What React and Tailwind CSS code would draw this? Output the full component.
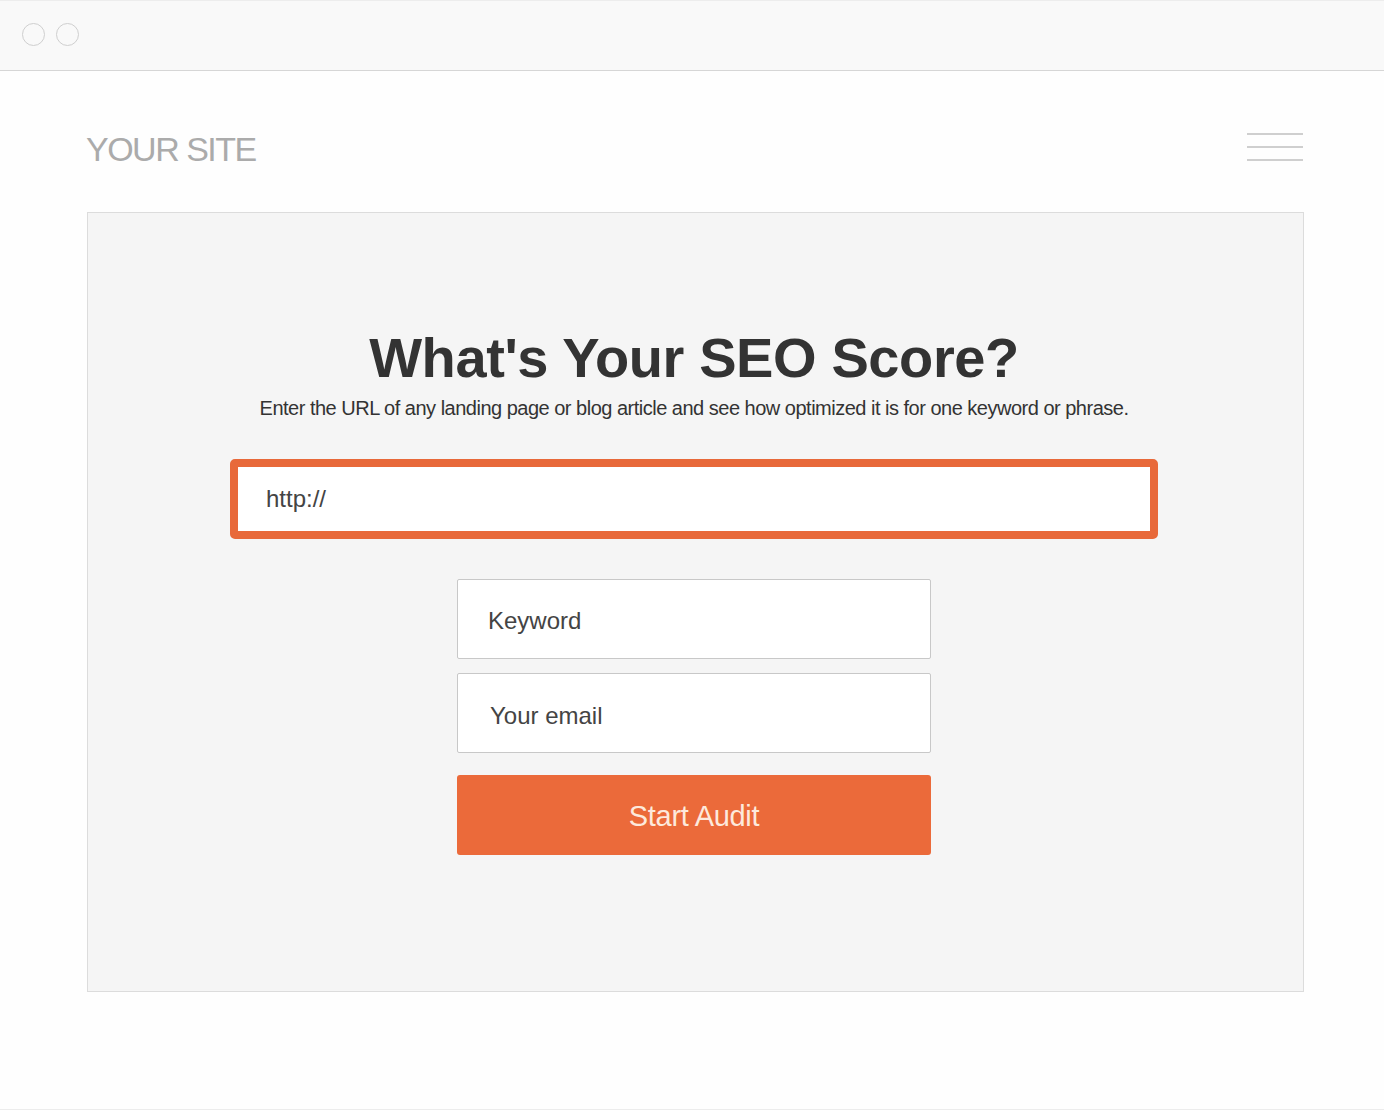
import React from 'react';

const App = () => {
  return (
    <div className="w-[1384px] h-[1110px] bg-[#fefefe] border-b border-[#ececec] overflow-hidden" style={{ fontFamily: '"Liberation Sans", Arial, sans-serif' }}>
      {/* Browser chrome */}
      <div className="h-[71px] bg-[#f9f9f9] border-b border-[#d6d6d6] border-t border-t-[#ededed] flex items-start pt-[22px] pl-[22px] gap-[11px]">
        <div className="w-[23px] h-[23px] rounded-full border-[1.5px] border-[#cfcfcf]" />
        <div className="w-[23px] h-[23px] rounded-full border-[1.5px] border-[#cfcfcf]" />
      </div>

      <div className="pl-[87px] pr-[80px]">
        {/* Site header */}
        <div className="flex justify-between items-start mt-[61px]">
          <span className="text-[34px] leading-none tracking-[-1.5px] text-[#ababab] -ml-[1px]">YOUR SITE</span>
          <div className="flex flex-col gap-[11px] pt-[1px] mr-[1px]">
            <div className="w-[56px] h-[2px] bg-[#cfcfcf]" />
            <div className="w-[56px] h-[2px] bg-[#cfcfcf]" />
            <div className="w-[56px] h-[2px] bg-[#cfcfcf]" />
          </div>
        </div>

        {/* Audit card */}
        <div className="mt-[46px] h-[780px] bg-[#f5f5f5] border border-[#dcdcdc] flex flex-col items-center pt-[117px] pr-[3px]">
          <h1 className="text-[56px] leading-none font-bold tracking-[-0.4px] text-[#333333]">What's Your SEO Score?</h1>
          <p className="mt-[10px] text-[20px] leading-[24px] tracking-[-0.5px] text-[#333333]">
            Enter the URL of any landing page or blog article and see how optimized it is for one keyword or phrase.
          </p>

          <div className="mt-[39px] w-[928px] h-[80px] bg-white border-[8px] border-[#e8693a] rounded-[5px] flex items-center pl-[28px]">
            <span className="text-[24px] text-[#444444]">http://</span>
          </div>

          <div className="mt-[40px] w-[474px] h-[80px] bg-white border border-[#c8c8c8] rounded-[2px] flex items-center pl-[30px] pt-[3px]">
            <span className="text-[24px] text-[#444444]">Keyword</span>
          </div>
          <div className="mt-[14px] w-[474px] h-[80px] bg-white border border-[#c8c8c8] rounded-[2px] flex items-center pl-[32px] pt-[6px]">
            <span className="text-[24px] text-[#444444]">Your email</span>
          </div>
          <button className="mt-[22px] w-[474px] h-[80px] bg-[#eb6a3a] rounded-[3px] text-[29px] tracking-[-0.3px] text-[#fde9dc] pt-[3px]">
            Start Audit
          </button>
        </div>
      </div>
    </div>
  );
};

export default App;
